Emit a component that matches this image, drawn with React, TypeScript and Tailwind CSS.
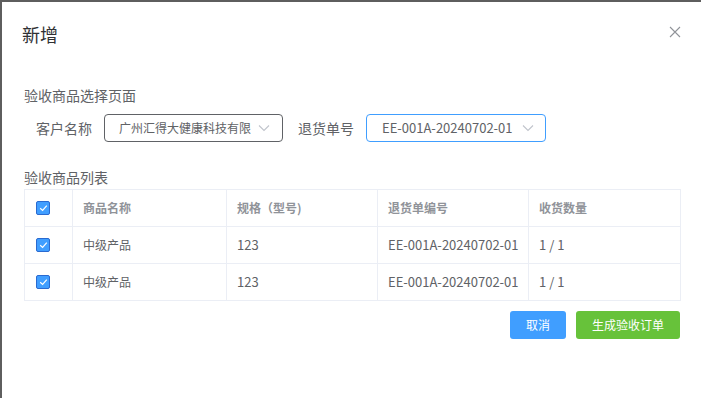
import React from "react";

const font = { fontFamily: '"Noto Sans CJK SC", "Noto Sans", sans-serif' };

function Check() {
  return (
    <span className="flex h-[14px] w-[14px] items-center justify-center rounded-[2px] border border-[#2a6ad0] bg-[#409eff]">
      <svg width="9" height="8" viewBox="0 0 9 8" fill="none">
        <path d="M1.2 4.2 L3.6 6.4 L7.8 1.6" stroke="white" strokeWidth="1.2" />
      </svg>
    </span>
  );
}

function Chevron() {
  return (
    <svg width="12" height="8" viewBox="0 0 12 8" fill="none">
      <path d="M1 1.5 L6 6.5 L11 1.5" stroke="#c0c4cc" strokeWidth="1.1" />
    </svg>
  );
}

const rows = [
  { name: "中级产品", spec: "123", no: "EE-001A-20240702-01", qty: "1 / 1" },
  { name: "中级产品", spec: "123", no: "EE-001A-20240702-01", qty: "1 / 1" },
];

export default function App() {
  return (
    <div className="h-[398px] w-[701px] overflow-hidden bg-[#5e5e5e] pl-[2px] pt-[2px]" style={font}>
      <div className="h-[420px] w-[720px] bg-white">
        <div className="flex w-[699px] items-start justify-between pl-[20px] pr-[20px] pt-[20px]">
          <span className="text-[18px] leading-[24px] text-[#303133]">新增</span>
          <svg width="12" height="12" viewBox="0 0 12 12" className="mt-[4px]" fill="none">
            <path d="M1 1 L11 11 M11 1 L1 11" stroke="#909399" strokeWidth="1.1" />
          </svg>
        </div>
        <div className="w-[699px] pl-[22px] pr-[21px] pt-[40px]">
          <div className="text-[14px] leading-[18px] text-[#606266]">验收商品选择页面</div>
          <div className="mt-[10px] flex items-center">
            <span className="ml-[12px] w-[68px] text-[14px] leading-[18px] text-[#606266]">客户名称</span>
            <div className="flex h-[28px] w-[179px] items-center justify-between rounded-[4px] border border-[#606266] pl-[14px] pr-[12px]">
              <span className="overflow-hidden whitespace-nowrap text-[12px] text-[#606266]">广州汇得大健康科技有限·</span>
              <span className="ml-[6px] shrink-0"><Chevron /></span>
            </div>
            <span className="ml-[15px] w-[68px] text-[14px] leading-[18px] text-[#606266]">退货单号</span>
            <div className="flex h-[28px] w-[180px] items-center justify-between rounded-[4px] border border-[#409eff] pl-[15px] pr-[11px]">
              <span className="truncate text-[13px] text-[#606266]">EE-001A-20240702-01</span>
              <Chevron />
            </div>
          </div>
          <div className="mt-[26px] text-[14px] leading-[18px] text-[#606266]">验收商品列表</div>
          <table className="mt-[3px] w-[656px] table-fixed border-collapse text-[13px]">
            <colgroup>
              <col className="w-[48px]" />
              <col className="w-[154px]" />
              <col className="w-[151px]" />
              <col className="w-[151px]" />
              <col className="w-[152px]" />
            </colgroup>
            <thead>
              <tr className="h-[37px]">
                <th className="border border-[#ebeef5] pl-[11px] text-left align-middle font-normal">
                  <Check />
                </th>
                <th className="border border-[#ebeef5] pl-[10px] text-left text-[12px] font-bold text-[#909399]">商品名称</th>
                <th className="border border-[#ebeef5] pl-[10px] text-left text-[12px] font-bold text-[#909399]">规格（型号)</th>
                <th className="border border-[#ebeef5] pl-[10px] text-left text-[12px] font-bold text-[#909399]">退货单编号</th>
                <th className="border border-[#ebeef5] pl-[10px] text-left text-[12px] font-bold text-[#909399]">收货数量</th>
              </tr>
            </thead>
            <tbody>
              {rows.map((r, i) => (
                <tr key={i} className="h-[37px] text-[#606266]">
                  <td className="border border-[#ebeef5] pl-[11px] align-middle"><Check /></td>
                  <td className="border border-[#ebeef5] pl-[10px] text-[12px]">{r.name}</td>
                  <td className="border border-[#ebeef5] pl-[10px]">{r.spec}</td>
                  <td className="border border-[#ebeef5] pl-[10px]">{r.no}</td>
                  <td className="border border-[#ebeef5] pl-[10px]">{r.qty}</td>
                </tr>
              ))}
            </tbody>
          </table>
          <div className="mt-[10px] flex w-[656px] justify-end gap-[10px]">
            <button className="h-[28px] w-[56px] rounded-[3px] bg-[#409eff] text-[12px] text-white">取消</button>
            <button className="h-[28px] w-[104px] rounded-[3px] bg-[#67c23a] text-[12px] text-white">生成验收订单</button>
          </div>
        </div>
      </div>
    </div>
  );
}
